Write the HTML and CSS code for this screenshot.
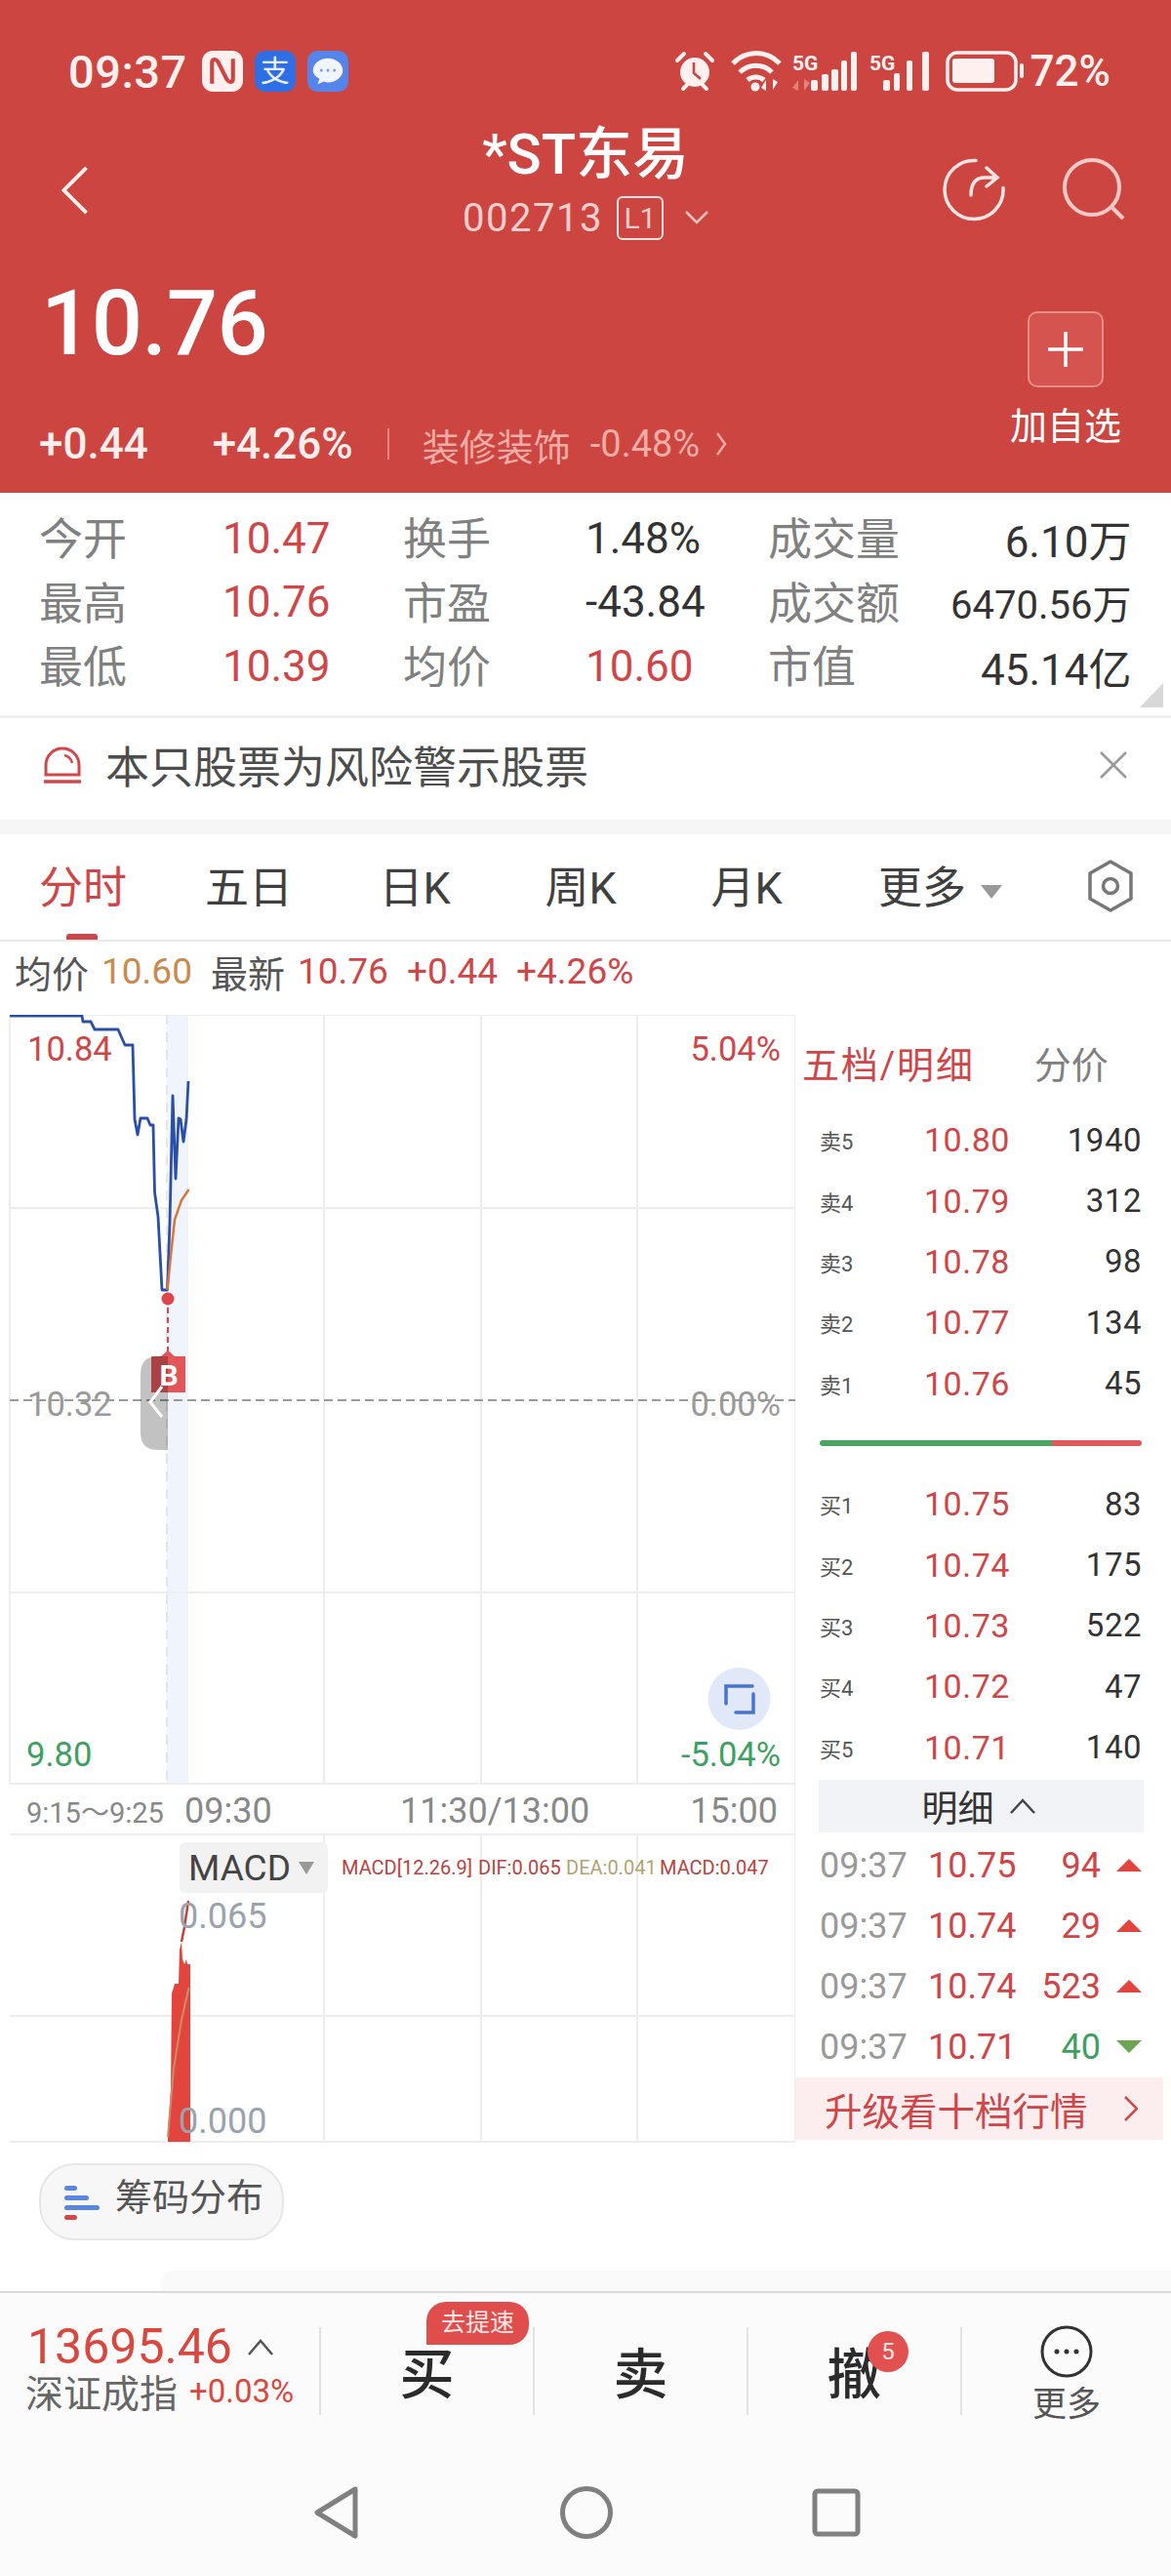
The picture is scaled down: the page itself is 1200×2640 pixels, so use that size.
FILE: index.html
```html
<!DOCTYPE html>
<html lang="zh-CN">
<head>
    <meta charset="UTF-8">
    <meta name="viewport" content="width=device-width, initial-scale=1.0">
    <title>*ST东易 002713</title>
    <link rel="stylesheet" href="styles.css">
</head>
<body>
    <header class="header">
        <div class="status">
            <span class="clock">09:37</span>
            <svg class="status-app" viewBox="0 0 41 41">
                <rect width="41" height="41" rx="11" fill="#fdf0ee"/>
                <path d="M10 33V12c0-4 4-4 6-1l9 18c2 3 6 3 6-1V8" fill="none" stroke="#cc4540" stroke-width="4"/>
            </svg>
            <span class="status-app alipay">支</span>
            <svg class="status-app" viewBox="0 0 44 44">
                <rect width="44" height="44" rx="11" fill="#5585ea"/>
                <path d="M22 8c9 0 16 6 16 13s-7 13-16 13c-1 0-3 0-4-1l-7 3 2-6c-4-2-7-5-7-9C6 14 13 8 22 8z" fill="#f0f6ff"/>
                <circle cx="15" cy="21" r="1.6" fill="#7a9ee8"/><circle cx="22" cy="21" r="1.6" fill="#7a9ee8"/><circle cx="29" cy="21" r="1.6" fill="#7a9ee8"/>
            </svg>
            <div class="status-right">
                <svg class="status-icons" viewBox="690 50 362 46">
                    <!-- alarm -->
                    <circle cx="713" cy="74" r="15" fill="#fdf0ee"/>
                    <path d="M695 62l7-7M731 62l-7-7M701 91l4-4M725 91l-4-4" stroke="#fdf0ee" stroke-width="4" stroke-linecap="round"/>
                    <path d="M712 64v11l7 6" fill="none" stroke="#cc4540" stroke-width="2.6"/>
                    <!-- wifi -->
                    <g fill="none" stroke="#fdf0ee" stroke-width="5">
                        <path d="M752 65c14-14 34-14 48 0"/>
                        <path d="M759 74c10-9 24-9 33 0"/>
                        <path d="M767 82c5-4 12-4 17 0"/>
                    </g>
                    <circle cx="775" cy="89" r="4.5" fill="#fdf0ee"/>
                    <path d="M786 93v-11l-5 8zM793 81v11l5-8z" fill="#fdf0ee"/>
                    <!-- first sim -->
                    <text class="sim-label" x="813" y="72">5G</text>
                    <path d="M819 93V82l-6 8zM825 81v12l6-8z" fill="#e6827c"/>
                    <g fill="#fdf0ee">
                        <rect x="832" y="82" width="7" height="11" rx="2"/>
                        <rect x="843" y="76" width="7" height="17" rx="2"/>
                        <rect x="853" y="71" width="7" height="22" rx="2"/>
                        <rect x="863" y="62" width="6" height="31" rx="2"/>
                        <rect x="873" y="53" width="6" height="40" rx="2"/>
                    </g>
                    <!-- second sim -->
                    <text class="sim-label" x="892" y="72">5G</text>
                    <g fill="#fdf0ee">
                        <rect x="906" y="82" width="7" height="11" rx="2"/>
                        <rect x="917" y="75" width="6" height="18" rx="2"/>
                        <rect x="930" y="62" width="6" height="31" rx="2"/>
                        <rect x="946" y="53" width="7" height="40" rx="2"/>
                    </g>
                    <!-- battery -->
                    <rect x="972" y="54" width="70" height="38" rx="10" fill="none" stroke="#fdf0ee" stroke-width="3.5"/>
                    <rect x="977" y="60" width="43" height="25" rx="3" fill="#fdf0ee"/>
                    <rect x="1046" y="65" width="4" height="15" rx="2" fill="#fdf0ee"/>
                </svg>
                <span class="battery-level">72%</span>
            </div>
        </div>

        <div class="titlebar">
            <svg class="back-icon" viewBox="0 0 30 54">
                <path d="M27 3L3 27l24 24" fill="none" stroke="#fdf0ee" stroke-width="4"/>
            </svg>
            <div class="title-block">
                <div class="stock-name">*ST东易</div>
                <div class="stock-code">
                    <span>002713</span>
                    <span class="level-tag">L1</span>
                    <svg class="code-arrow" viewBox="0 0 24 14">
                        <path d="M1 1l11 11L23 1" fill="none" stroke="#f5c4c0" stroke-width="2.5"/>
                    </svg>
                </div>
            </div>
            <svg class="title-icons" viewBox="960 155 200 75">
                <path d="M1000 164.5a30 30 0 1 0 28 28" fill="none" stroke="#fbe4e2" stroke-width="3.5" stroke-linecap="round"/>
                <path d="M995 200c0-12 5-18 14-18h13M1011 172l11 10-11 9" fill="none" stroke="#fbe4e2" stroke-width="3.5" stroke-linecap="round"/>
                <circle cx="1119" cy="192" r="28" fill="none" stroke="#f7c9c6" stroke-width="4"/>
                <path d="M1140 213l11 11" stroke="#f7c9c6" stroke-width="4"/>
            </svg>
        </div>

        <div class="quote">
            <div>
                <div class="last-price">10.76</div>
                <div class="change-row">
                    <span class="change-amount">+0.44</span>
                    <span class="change-pct">+4.26%</span>
                    <span class="change-sep"></span>
                    <span class="sector">装修装饰</span>
                    <span class="sector-pct">-0.48%</span>
                    <svg class="sector-arrow" viewBox="0 0 12 26">
                        <path d="M2 2l8 11-8 11" fill="none" stroke="#f0a8a2" stroke-width="2.5"/>
                    </svg>
                </div>
            </div>
            <div class="watch">
                <div class="watch-btn">
                    <svg viewBox="0 0 40 40" width="40" height="40">
                        <path d="M20 2v36M2 20h36" stroke="#fff" stroke-width="3.5"/>
                    </svg>
                </div>
                <div class="watch-label">加自选</div>
            </div>
        </div>
    </header>

    <section class="stats">
        <span class="stat-label">今开</span><span class="stat-val up">10.47</span>
        <span class="stat-label">换手</span><span class="stat-val">1.48%</span>
        <span class="stat-label">成交量</span><span class="stat-val end">6.10万</span>
        <span class="stat-label">最高</span><span class="stat-val up">10.76</span>
        <span class="stat-label">市盈</span><span class="stat-val">-43.84</span>
        <span class="stat-label">成交额</span><span class="stat-val end small">6470.56万</span>
        <span class="stat-label">最低</span><span class="stat-val up">10.39</span>
        <span class="stat-label">均价</span><span class="stat-val up">10.60</span>
        <span class="stat-label">市值</span><span class="stat-val end">45.14亿</span>
        <span class="stats-corner"></span>
    </section>

    <section class="warning">
        <svg class="warning-icon" viewBox="0 0 40 40">
            <path d="M3 30V20a17 17 0 0 1 34 0v10z" fill="none" stroke="#d0484a" stroke-width="3"/>
            <path d="M22 10c4 1 7 4 8 8" fill="none" stroke="#d0484a" stroke-width="2.5"/>
            <path d="M1 37h38" stroke="#d0484a" stroke-width="3.5"/>
        </svg>
        <span class="warning-text">本只股票为风险警示股票</span>
        <svg class="warning-close" viewBox="0 0 28 28">
            <path d="M1 1l26 26M27 1L1 27" stroke="#999" stroke-width="2.5"/>
        </svg>
    </section>

    <nav class="tabs">
        <span class="tab active">分时</span>
        <span class="tab">五日</span>
        <span class="tab">日K</span>
        <span class="tab">周K</span>
        <span class="tab">月K</span>
        <span class="tab tab-more">更多<i class="tab-caret"></i></span>
        <svg class="tab-settings" viewBox="0 0 50 54">
            <path d="M25 2l21 12v26L25 52 4 40V14z" fill="none" stroke="#777" stroke-width="3.5" stroke-linejoin="round"/>
            <circle cx="25" cy="27" r="7.5" fill="none" stroke="#777" stroke-width="3.5"/>
        </svg>
    </nav>

    <div class="legend">
        <span class="legend-label">均价</span>
        <span class="legend-avg">10.60</span>
        <span class="legend-label legend-gap">最新</span>
        <span class="legend-up">10.76</span>
        <span class="legend-up legend-gap">+0.44</span>
        <span class="legend-up legend-gap">+4.26%</span>
    </div>

    <main class="main">
        <!-- price and MACD panels share one canvas, coordinates are page pixels -->
        <svg class="chart" viewBox="0 1040 815 1157">
            <rect x="171" y="1040" width="22" height="788" fill="#f0f5fd"/>
            <g class="grid">
                <path d="M10 1040H815M10 1238H815M10 1632H815M10 1828H815M10 1880H815M10 2066H815M10 2195H815"/>
                <path d="M10 1040V1828M332 1040V1828M493 1040V1828M653 1040V1828M815 1040V2195"/>
                <path d="M332 1880V2195M493 1880V2195M653 1880V2195"/>
            </g>
            <path d="M171 1040V1828" class="grid-dash"/>
            <path d="M10 1435H815" class="mid-line"/>

            <path class="line-price" d="M10 1041L84 1041 85 1047 93 1047 97 1055 121 1055 128 1071 136 1071 138 1147 141 1163 144 1146 151 1146 154 1153 157 1153 158.5 1222 162 1247 166 1322 171.5 1322 174 1253 177 1123 180 1208 183 1146 185 1147 188 1170 191 1147 193 1108"/>
            <path class="line-avg" d="M171.5 1322L175 1287 179 1250 186 1230 193.5 1219"/>

            <!-- buy marker, the collapsed side handle sits over it -->
            <circle cx="172" cy="1331" r="6.5" fill="#e0444c"/>
            <path d="M172 1340V1386" stroke="#e0444c" stroke-width="2" stroke-dasharray="6 4"/>
            <path d="M155 1390H165L172 1384 179 1390H190V1427H155z" fill="#e2565a"/>
            <path d="M172 1390V1486H162Q144 1486 144 1468V1408Q144 1390 162 1390z" fill="#000" fill-opacity="0.24"/>
            <text class="marker-text" x="173" y="1420">B</text>
            <path d="M166 1421L154 1437 166 1452" fill="none" stroke="#fff" stroke-width="3"/>

            <text class="axis-val up" x="28" y="1087">10.84</text>
            <text class="axis-val up end" x="800" y="1087">5.04%</text>
            <text class="axis-val flat" x="28" y="1451">10.32</text>
            <text class="axis-val flat end" x="800" y="1451">0.00%</text>
            <text class="axis-val down" x="27" y="1810">9.80</text>
            <text class="axis-val down end" x="800" y="1810">-5.04%</text>

            <circle cx="757.5" cy="1741" r="32" fill="#e1e9f9"/>
            <path d="M771 1728H744V1746M772 1736V1755H754" fill="none" stroke="#4a72d0" stroke-width="3.5" stroke-linecap="round"/>

            <text class="time-small" x="27" y="1868">9:15～9:25</text>
            <text class="time-label" x="189" y="1868">09:30</text>
            <text class="time-label" x="410" y="1868">11:30/13:00</text>
            <text class="time-label end" x="797" y="1868">15:00</text>

            <!-- MACD panel -->
            <rect x="184" y="1888" width="152" height="52" rx="6" fill="#f2f2f2"/>
            <text class="macd-chip" x="193" y="1927">MACD</text>
            <path d="M306 1908H322L314 1921z" fill="#999"/>
            <text class="macd-param macd-red" x="350" y="1921">MACD[12.26.9]</text>
            <text class="macd-param macd-red" x="490" y="1921">DIF:0.065</text>
            <text class="macd-param macd-tan" x="580" y="1921">DEA:0.041</text>
            <text class="macd-param macd-red" x="676" y="1921">MACD:0.047</text>
            <path d="M172 2195V2185L175 2140 176 2043 179 2033 183 2033 184 1998 186 1990 187 2008 189 2013 191 2008 192 2013 195 2013V2195z" fill="#e2453e"/>
            <path d="M186 1990L189 1975 193 1948" fill="none" stroke="#c8403a" stroke-width="2.5"/>
            <path d="M172 2190L178 2120 186 2070 193.5 2037" fill="none" stroke="#cf8a66" stroke-width="2"/>
            <text class="macd-axis" x="183" y="1976">0.065</text>
            <text class="macd-axis" x="183" y="2186">0.000</text>
        </svg>

        <aside class="book">
            <div class="book-tabs">
                <span class="book-tab-on">五档/明细</span>
                <span class="book-tab-off">分价</span>
            </div>
            <div class="book-row"><span class="book-label">卖5</span><span class="book-price">10.80</span><span class="book-size">1940</span></div>
            <div class="book-row"><span class="book-label">卖4</span><span class="book-price">10.79</span><span class="book-size">312</span></div>
            <div class="book-row"><span class="book-label">卖3</span><span class="book-price">10.78</span><span class="book-size">98</span></div>
            <div class="book-row"><span class="book-label">卖2</span><span class="book-price">10.77</span><span class="book-size">134</span></div>
            <div class="book-row"><span class="book-label">卖1</span><span class="book-price">10.76</span><span class="book-size">45</span></div>
            <div class="book-ratio"><span class="book-ratio-bid"></span><span class="book-ratio-ask"></span></div>
            <div class="book-row"><span class="book-label">买1</span><span class="book-price">10.75</span><span class="book-size">83</span></div>
            <div class="book-row"><span class="book-label">买2</span><span class="book-price">10.74</span><span class="book-size">175</span></div>
            <div class="book-row"><span class="book-label">买3</span><span class="book-price">10.73</span><span class="book-size">522</span></div>
            <div class="book-row"><span class="book-label">买4</span><span class="book-price">10.72</span><span class="book-size">47</span></div>
            <div class="book-row"><span class="book-label">买5</span><span class="book-price">10.71</span><span class="book-size">140</span></div>
            <div class="detail-head">明细
                <svg viewBox="0 0 26 16" width="26" height="16">
                    <path d="M1 15L13 2l12 13" fill="none" stroke="#444" stroke-width="2.5"/>
                </svg>
            </div>
            <div class="trades">
                <div class="trade"><span class="trade-time">09:37</span><span class="up">10.75</span><span class="trade-vol up">94</span><i class="tri-up"></i></div>
                <div class="trade"><span class="trade-time">09:37</span><span class="up">10.74</span><span class="trade-vol up">29</span><i class="tri-up"></i></div>
                <div class="trade"><span class="trade-time">09:37</span><span class="up">10.74</span><span class="trade-vol up">523</span><i class="tri-up"></i></div>
                <div class="trade"><span class="trade-time">09:37</span><span class="up">10.71</span><span class="trade-vol down">40</span><i class="tri-down"></i></div>
            </div>
            <div class="upgrade">
                <span>升级看十档行情</span>
                <svg viewBox="0 0 14 26" width="14" height="26">
                    <path d="M1 1l12 12L1 25" fill="none" stroke="#d0484a" stroke-width="2.5"/>
                </svg>
            </div>
        </aside>
    </main>

    <div class="chips">
        <div class="chip">
            <svg class="chip-icon" viewBox="0 0 36 40" width="36" height="40">
                <rect x="0" y="0" width="13" height="5" rx="2.5" fill="#5b86e0"/>
                <rect x="0" y="10" width="25" height="5" rx="2.5" fill="#5b86e0"/>
                <rect x="0" y="20" width="36" height="5" rx="2.5" fill="#5b86e0"/>
                <rect x="0" y="30" width="13" height="5" rx="2.5" fill="#d0484a"/>
            </svg>
            <span class="chip-text">筹码分布</span>
        </div>
    </div>
    <div class="sheet-edge"></div>

    <footer class="footer">
        <div class="actions">
            <div class="index-cell">
                <div class="index-top">
                    <span class="index-val">13695.46</span>
                    <svg viewBox="0 0 28 18" width="28" height="18">
                        <path d="M2 17L14 3l12 14" fill="none" stroke="#555" stroke-width="2.5"/>
                    </svg>
                </div>
                <div class="index-bottom">
                    <span class="index-name">深证成指</span>
                    <span class="index-pct">+0.03%</span>
                </div>
            </div>
            <div class="action-cell">买<span class="speed-tag">去提速</span></div>
            <div class="action-cell">卖</div>
            <div class="action-cell">撤<span class="order-count">5</span></div>
            <div class="action-cell more-cell">
                <svg viewBox="0 0 54 54" width="54" height="54">
                    <circle cx="27" cy="27" r="25" fill="none" stroke="#333" stroke-width="3"/>
                    <circle cx="17" cy="27" r="2.5" fill="#333"/><circle cx="27" cy="27" r="2.5" fill="#333"/><circle cx="37" cy="27" r="2.5" fill="#333"/>
                </svg>
                <span class="more-label">更多</span>
            </div>
        </div>
        <div class="sysnav">
            <svg viewBox="0 0 50 54" width="50" height="54">
                <path d="M44 3L5 27l39 24z" fill="none" stroke="#808080" stroke-width="5" stroke-linejoin="round"/>
            </svg>
            <svg viewBox="0 0 54 54" width="54" height="54">
                <circle cx="27" cy="27" r="24.5" fill="none" stroke="#808080" stroke-width="5"/>
            </svg>
            <svg viewBox="0 0 50 50" width="50" height="50">
                <rect x="3" y="3" width="44" height="44" rx="3" fill="none" stroke="#808080" stroke-width="5"/>
            </svg>
        </div>
    </footer>
</body>
</html>
```

FILE: styles.css
```css
* {
    box-sizing: border-box;
}
html, body {
    margin: 0;
    padding: 0;
}
body {
    width: 1200px;
    height: 2640px;
    overflow: hidden;
    background: #fff;
    font-family: Roboto, "Noto Sans CJK SC", sans-serif;
    color: #333;
}
.up { color: #cf4649; }
.down { color: #3f9f63; }

/* red header */
.header {
    height: 505px;
    padding-top: 52px;
    background: #cc4540;
    color: #fff;
}
.status {
    display: flex;
    align-items: center;
    height: 42px;
    padding: 0 62px 0 70px;
}
.clock {
    font-size: 47px;
    font-weight: 500;
    color: #fdf0ee;
    margin-right: 15px;
    letter-spacing: 0.5px;
}
.status-app {
    width: 42px;
    height: 42px;
    margin-right: 12px;
    flex: none;
}
.alipay {
    background: #2f6fe6;
    border-radius: 11px;
    color: #eaf2ff;
    font-size: 30px;
    line-height: 42px;
    text-align: center;
}
.status-right {
    display: flex;
    align-items: center;
    margin-left: auto;
}
.status-icons {
    width: 362px;
    height: 46px;
}
.sim-label {
    font-size: 21px;
    font-weight: 700;
    fill: #fdf0ee;
}
.battery-level {
    font-size: 44px;
    font-weight: 500;
    color: #fdf0ee;
    margin-left: 5px;
}
.titlebar {
    position: relative;
    height: 120px;
    margin-top: 34px;
}
.back-icon {
    position: absolute;
    left: 62px;
    top: 41px;
    width: 30px;
    height: 52px;
}
.title-block {
    text-align: center;
}
.stock-name {
    font-size: 58px;
    line-height: 60px;
    font-weight: 500;
}
.stock-code {
    display: flex;
    justify-content: center;
    align-items: center;
    height: 50px;
    margin-top: 10px;
    font-size: 40px;
    letter-spacing: 1.5px;
    color: #f5cfcd;
}
.level-tag {
    width: 48px;
    height: 45px;
    margin-left: 14px;
    border: 2px solid #fbe4e2;
    border-radius: 6px;
    font-size: 30px;
    line-height: 41px;
    text-align: center;
    letter-spacing: 0;
}
.code-arrow {
    width: 24px;
    height: 14px;
    margin-left: 22px;
}
.title-icons {
    position: absolute;
    left: 960px;
    top: 27px;
    width: 200px;
    height: 75px;
}
.quote {
    display: flex;
    justify-content: space-between;
    padding: 39px 50px 0 40px;
}
.last-price {
    font-size: 92px;
    line-height: 90px;
    font-weight: 500;
    margin-left: 2px;
    letter-spacing: -0.5px;
}
.change-row {
    display: flex;
    align-items: center;
    height: 50px;
    margin-top: 53px;
    font-size: 44px;
    font-weight: 500;
    color: #fbeeed;
    white-space: nowrap;
}
.change-pct {
    margin-left: 66px;
}
.change-sep {
    width: 2px;
    height: 32px;
    margin: 0 34px 0 35px;
    background: #e08a85;
}
.sector {
    font-size: 38px;
    font-weight: 400;
    color: #f2aca6;
}
.sector-pct {
    margin-left: 20px;
    font-size: 38px;
    font-weight: 400;
    color: #f2aca6;
}
.sector-arrow {
    width: 12px;
    height: 26px;
    margin-left: 16px;
}
.watch {
    display: flex;
    flex-direction: column;
    align-items: center;
    width: 116px;
    padding-top: 32px;
}
.watch-btn {
    display: flex;
    align-items: center;
    justify-content: center;
    width: 78px;
    height: 78px;
    border: 2px solid #e88d88;
    border-radius: 10px;
    background: #d6544f;
}
.watch-label {
    margin-top: 18px;
    font-size: 38px;
    line-height: 44px;
    white-space: nowrap;
}

/* quote table */
.stats {
    position: relative;
    display: grid;
    grid-template-columns: 188px 185px 187px 187px 187px 1fr;
    grid-auto-rows: 65.5px;
    align-items: center;
    height: 231px;
    padding: 14px 42px 0 40px;
    border-bottom: 3px solid #f0f0f0;
}
.stat-label {
    margin-bottom: 4px;
    font-size: 45px;
    color: #808080;
    white-space: nowrap;
}
.stat-val {
    font-size: 44px;
    color: #333;
    white-space: nowrap;
}
.stat-val.up {
    color: #cf4649;
}
.stat-val.end {
    text-align: right;
}
.stat-val.small {
    font-size: 40px;
}
.stats-corner {
    position: absolute;
    right: 8px;
    bottom: 8px;
    width: 24px;
    height: 25px;
    background: #d8d8d8;
    clip-path: polygon(100% 0, 100% 100%, 0 100%);
}

/* risk notice */
.warning {
    display: flex;
    align-items: center;
    height: 119px;
    padding: 0 45px 9px 44px;
    border-bottom: 15px solid #f6f6f6;
}
.warning-icon {
    width: 40px;
    height: 40px;
    margin-right: 24px;
}
.warning-text {
    font-size: 45px;
    color: #4d4d4d;
}
.warning-close {
    width: 28px;
    height: 28px;
    margin-left: auto;
}

/* period tabs */
.tabs {
    position: relative;
    display: flex;
    align-items: center;
    height: 110px;
    padding-bottom: 5px;
    border-bottom: 2px solid #e8e8e8;
}
.tab {
    width: 170px;
    font-size: 45px;
    text-align: center;
    color: #404040;
    white-space: nowrap;
}
.tab.active {
    color: #cf4649;
}
.tab.active::after {
    content: "";
    position: absolute;
    left: 68px;
    bottom: 0;
    width: 32px;
    height: 6px;
    border-radius: 3px 3px 0 0;
    background: #cf4649;
}
.tab-more {
    padding-left: 50px;
}
.tab-caret {
    display: inline-block;
    width: 0;
    height: 0;
    margin-left: 15px;
    vertical-align: 5px;
    border-left: 11px solid transparent;
    border-right: 11px solid transparent;
    border-top: 14px solid #999;
}
.tab-settings {
    position: absolute;
    left: 1113px;
    top: 26px;
    width: 50px;
    height: 54px;
}
.legend {
    display: flex;
    align-items: center;
    height: 75px;
    padding: 0 0 15px 15px;
    font-size: 37px;
}
.legend-label {
    font-size: 38px;
    color: #555;
}
.legend-avg {
    margin-left: 13px;
    color: #c98a4e;
}
.legend-up {
    margin-left: 13px;
    color: #cf4649;
}
.legend-gap {
    margin-left: 19px;
}

/* chart and order book */
.main {
    display: flex;
    height: 1157px;
}
.chart {
    flex: none;
    display: block;
    width: 815px;
    height: 1157px;
}
.grid path {
    fill: none;
    stroke: #ededed;
    stroke-width: 2;
}
.grid-dash {
    stroke: #e6e6e6;
    stroke-width: 2;
    stroke-dasharray: 10 8;
}
.mid-line {
    stroke: #9a9a9a;
    stroke-width: 2;
    stroke-dasharray: 9 5;
}
.line-price {
    fill: none;
    stroke: #2a4fa8;
    stroke-width: 2.8;
    stroke-linejoin: round;
}
.line-avg {
    fill: none;
    stroke: #d9773a;
    stroke-width: 2.5;
}
.marker-text {
    font-size: 30px;
    font-weight: 700;
    text-anchor: middle;
    fill: #fff;
}
.axis-val {
    font-size: 34.5px;
}
.axis-val.up { fill: #cf4649; }
.axis-val.down { fill: #3f9f63; }
.axis-val.flat { fill: #999; }
.end {
    text-anchor: end;
}
.time-small {
    font-size: 29px;
    fill: #888;
}
.time-label {
    font-size: 36px;
    fill: #888;
}
.macd-chip {
    font-size: 37px;
    fill: #444;
}
.macd-param {
    font-size: 20px;
}
.macd-red { fill: #b8423f; }
.macd-tan { fill: #b3a272; }
.macd-axis {
    font-size: 36px;
    fill: #9aa3ad;
}
.book {
    width: 377px;
    flex: none;
}
.book-tabs {
    display: flex;
    align-items: center;
    height: 97px;
    padding-left: 7px;
    font-size: 38px;
}
.book-tab-on {
    color: #cf4649;
    letter-spacing: 1.8px;
}
.book-tab-off {
    margin-left: 61px;
    color: #808080;
}
.book-row {
    display: grid;
    grid-template-columns: 107px 1fr auto;
    align-items: center;
    height: 62.4px;
    margin: 0 22px 0 25px;
}
.book-label {
    font-size: 22px;
    color: #555;
}
.book-price {
    font-size: 34px;
    color: #cf4649;
    letter-spacing: 0.5px;
}
.book-size {
    font-size: 33px;
    color: #333;
    letter-spacing: 0.5px;
}
.book-ratio {
    display: flex;
    height: 6px;
    margin: 27px 22px 28px 25px;
    border-radius: 3px;
    overflow: hidden;
}
.book-ratio-bid {
    width: 238px;
    background: #4aa564;
}
.book-ratio-ask {
    flex: 1;
    background: #e05a5c;
}
.detail-head {
    display: flex;
    align-items: center;
    justify-content: center;
    height: 54px;
    margin: 2px 20px 0 24px;
    padding-right: 6px;
    background: #f1f3f7;
    font-size: 37px;
    color: #333;
    gap: 16px;
}
.trades {
    padding-top: 3px;
}
.trade {
    display: grid;
    grid-template-columns: 111px 89px 88px 1fr;
    align-items: center;
    height: 62px;
    margin: 0 22px 0 25px;
    font-size: 36px;
}
.trade-time {
    color: #999;
}
.trade-vol {
    text-align: right;
}
.tri-up, .tri-down {
    justify-self: end;
    width: 0;
    height: 0;
    border-left: 13px solid transparent;
    border-right: 13px solid transparent;
}
.tri-up {
    border-bottom: 13px solid #e2453e;
}
.tri-down {
    border-top: 13px solid #6ea553;
}
.upgrade {
    display: flex;
    align-items: center;
    justify-content: space-between;
    height: 64px;
    padding: 0 26px 0 30px;
    background: #fceeee;
    font-size: 38.5px;
    color: #cf4649;
}
.chips {
    height: 130px;
    padding: 20px 0 0 40px;
}
.chip {
    display: flex;
    align-items: center;
    width: 251px;
    height: 79px;
    padding-left: 24px;
    border: 2px solid #e6e6e6;
    border-radius: 36px;
    background: #f7f7f7;
    font-size: 38px;
    color: #555;
}
.chip-icon {
    margin: 6px 16px 0 0;
}
.chip-text {
    margin-bottom: 16px;
}
.sheet-edge {
    height: 21px;
    margin-left: 165px;
    border-radius: 14px 0 0 0;
    background: #fafafa;
}

/* bottom trading bar */
.footer {
    height: 292px;
    border-top: 2px solid #d9d9d9;
    background: #fbfbfb;
}
.actions {
    display: flex;
    height: 90px;
    margin-top: 35px;
}
.index-cell {
    width: 327px;
    padding-left: 28px;
}
.index-top {
    display: flex;
    align-items: center;
    height: 40px;
    gap: 15px;
}
.index-val {
    font-size: 50px;
    line-height: 40px;
    color: #d9483f;
}
.index-bottom {
    display: flex;
    align-items: center;
    height: 40px;
    margin-top: 5px;
}
.index-name {
    font-size: 39px;
    color: #666;
    margin-left: -2px;
}
.index-pct {
    margin-left: 12px;
    font-size: 33px;
    color: #d9483f;
}
.action-cell {
    position: relative;
    display: flex;
    align-items: center;
    justify-content: center;
    width: 219px;
    padding-bottom: 4px;
    border-left: 2px solid #e2e2e2;
    font-size: 56px;
    font-weight: 500;
    color: #2b2b2b;
}
.speed-tag {
    position: absolute;
    left: 108px;
    top: -26px;
    width: 105px;
    height: 44px;
    border-radius: 20px 20px 20px 0;
    background: #e04d4d;
    color: #fde8e6;
    font-size: 25px;
    font-weight: 400;
    line-height: 44px;
    text-align: center;
}
.order-count {
    position: absolute;
    left: 122px;
    top: 4px;
    width: 42px;
    height: 42px;
    border-radius: 50%;
    background: #e25050;
    color: #fde8e6;
    font-size: 24px;
    font-weight: 400;
    line-height: 42px;
    text-align: center;
}
.more-cell {
    flex-direction: column;
    justify-content: flex-start;
    width: 216px;
    padding-bottom: 0;
}
.more-cell svg {
    flex: none;
    margin-top: -2px;
}
.more-label {
    flex: none;
    margin-top: 8px;
    font-size: 35px;
    line-height: 40px;
    font-weight: 400;
    color: #555;
}
.sysnav {
    display: flex;
    align-items: center;
    gap: 204px;
    padding: 73px 0 0 320px;
}
```
